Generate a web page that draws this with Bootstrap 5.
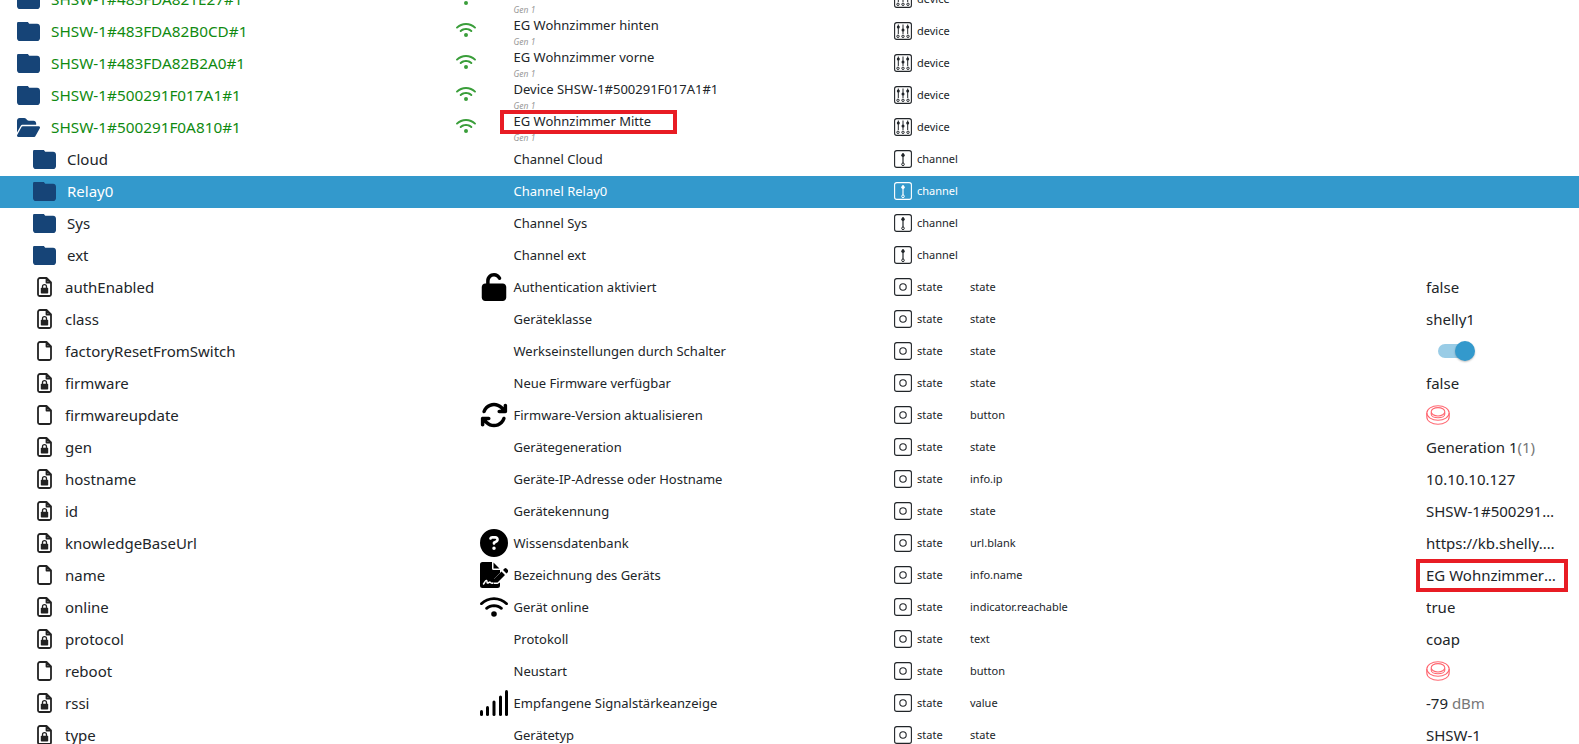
<!DOCTYPE html>
<html lang="de">
<head>
<meta charset="utf-8">
<title>Objekte</title>
<link href="https://cdn.jsdelivr.net/npm/bootstrap@5.3.0/dist/css/bootstrap.min.css" rel="stylesheet">
<style>
html,body{height:744px;overflow:hidden;background:#fff}
body{font-family:"Noto Sans","Open Sans",sans-serif;color:#212529}
.obj-tree{margin-top:-16px;position:relative}
.obj-row{height:32px;line-height:18px;padding-bottom:2px}
.obj-row.is-selected{background:#3399cc;color:#fff}
.col-name{width:454px;flex:none;font-size:15px}
.col-icon{width:59.5px;flex:none}
.col-desc{width:380.5px;flex:none;font-size:13px;position:relative;height:32px;line-height:32px}
.col-type{width:76px;flex:none;font-size:11px}
.col-role{width:456px;flex:none;font-size:11px}
.col-value{width:131px;flex:none;font-size:15px}
.lvl-1{padding-left:17px}.lvl-2{padding-left:33px}.lvl-3{padding-left:37px}
.ico-folder{width:23px;height:19px;color:#164477;margin-right:11px;flex:none}
.ico-file{width:15px;height:20px;margin-right:13px;flex:none;color:#222}
.ico-wifi{width:20px;height:16px;color:#3a9e3a;margin-left:2px;margin-top:-2px}
.ico-big{width:28px;height:28px;margin-left:26px;color:#000;display:block}
.ico-type{width:18px;height:18px;margin-right:5px;flex:none}
.ico-btn{width:24px;height:20px;display:block}
.obj-green{color:#108a10;font-size:15.300px}
.obj-muted{color:#777}
.desc-title{line-height:18px;position:absolute;left:0;top:1px;white-space:nowrap}
.desc-gen{position:absolute;left:0;top:21px;font-size:8.5px;line-height:12px;color:#999;font-style:italic;white-space:nowrap}
.obj-switch{display:block;position:relative;width:30px;height:14px;margin-left:12px;border-radius:7px;background:#99cce6}
.obj-switch::after{content:"";position:absolute;right:-7px;top:-3px;width:20px;height:20px;border-radius:50%;background:#3399cc;box-shadow:0 1px 2px rgba(0,0,0,.25)}
.mark-box{position:absolute;border:4px solid #e81c24;pointer-events:none}
.mark-a{left:500px;top:126px;width:177px;height:24px}
.mark-b{left:1416px;top:575px;width:152px;height:33px}
</style>
</head>
<body>
<svg width="0" height="0" class="position-absolute">
<symbol id="i-folder" viewBox="0 0 512 424" preserveAspectRatio="none"><path fill="currentColor" d="M64 424H448c35.3 0 64-28.7 64-64V104c0-35.3-28.7-64-64-64H288c-10.1 0-19.6-4.700-25.600-12.800L243.200 1.600C231.100-14.500 212.100-24 192-24H64C28.700-24 0 4.700 0 40V360c0 35.300 28.700 64 64 64z" transform="translate(0,0)"/></symbol>
<symbol id="i-open" viewBox="0 32 576 448" preserveAspectRatio="none"><path fill="currentColor" d="M88.700 223.800L0 375.800V96C0 60.700 28.700 32 64 32H181.500c17 0 33.300 6.700 45.300 18.700l26.500 26.500c12 12 28.300 18.700 45.300 18.700H416c35.300 0 64 28.700 64 64v32H144c-22.800 0-43.800 12.100-55.300 31.800zm27.600 16.100C122.100 230 132.600 224 144 224H544c11.500 0 21.900 6.200 27.600 16.100s5.600 22.200-.1 32.100l-112 192C453.800 474 443.400 480 432 480H32c-11.500 0-21.900-6.200-27.600-16.100s-5.600-22.200 .1-32.100l112-192z"/></symbol>
<symbol id="i-wifi" viewBox="0 32 640 448"><path fill="currentColor" d="M54.200 202.900C123.200 136.700 216.800 96 320 96s196.800 40.700 265.800 106.900c12.800 12.200 33 11.800 45.200-.9s11.800-33-.9-45.200C549.700 79.500 440.400 32 320 32S90.300 79.500 9.800 156.700C-2.900 169-3.300 189.200 8.900 202s32.500 13.200 45.200 .9zM320 256c56.800 0 108.600 21.100 148.200 56c13.300 11.700 33.500 10.400 45.200-2.800s10.400-33.500-2.800-45.200C459.800 219.200 393 192 320 192s-139.800 27.200-190.500 72c-13.300 11.700-14.500 31.900-2.800 45.200s31.900 14.500 45.200 2.800c39.500-34.900 91.300-56 148.200-56zm64 160a64 64 0 1 0 -128 0 64 64 0 1 0 128 0z"/></symbol>
<symbol id="i-file" viewBox="0 0 15 20"><path fill="none" stroke="currentColor" stroke-width="1.800" stroke-linejoin="round" d="M3 1H9.500L14 5.500V17.500A1.600 1.600 0 0 1 12.400 19H2.600A1.600 1.600 0 0 1 1 17.500V3A2 2 0 0 1 3 1ZM9.500 1V5.500H14"/></symbol>
<symbol id="i-filelock" viewBox="0 0 15 20"><path fill="none" stroke="currentColor" stroke-width="1.800" stroke-linejoin="round" d="M3 1H9.500L14 5.500V17.500A1.600 1.600 0 0 1 12.400 19H2.600A1.600 1.600 0 0 1 1 17.500V3A2 2 0 0 1 3 1ZM9.500 1V5.500H14"/><path fill="none" stroke="currentColor" stroke-width="1.300" d="M5.500 11V9.700A2 2 0 0 1 9.500 9.700V11"/><rect x="3.800" y="10.800" width="7.400" height="5.700" rx=".8" fill="currentColor"/></symbol>
<symbol id="i-device" viewBox="0 0 18 18"><rect x=".6" y=".6" width="16.800" height="16.800" rx="2.200" fill="none" stroke="currentColor" stroke-width="1.100"/><g fill="none" stroke="currentColor" stroke-width="1"><path d="M4.300 2.500V12M9 2.500V12M13.700 2.500V12"/><circle cx="4" cy="14.300" r="1.200"/><circle cx="9" cy="14.300" r="1.200"/><circle cx="14" cy="14.300" r="1.200"/></g><g fill="currentColor"><circle cx="4.300" cy="5" r="1.500"/><circle cx="9" cy="8" r="1.500"/><circle cx="13.700" cy="5" r="1.500"/></g></symbol>
<symbol id="i-channel" viewBox="0 0 18 18"><rect x=".6" y=".6" width="16.800" height="16.800" rx="2.200" fill="none" stroke="currentColor" stroke-width="1.100"/><path d="M9 3V13" fill="none" stroke="currentColor" stroke-width="1.200"/><circle cx="9" cy="5.300" r="1.700" fill="currentColor"/><circle cx="9" cy="14.300" r="1.300" fill="none" stroke="currentColor"/></symbol>
<symbol id="i-state" viewBox="0 0 18 18"><rect x=".6" y=".6" width="16.800" height="16.800" rx="2.200" fill="none" stroke="currentColor" stroke-width="1.100"/><circle cx="9" cy="9" r="3.200" fill="none" stroke="currentColor" stroke-width="1.100"/></symbol>
<symbol id="i-btn" viewBox="0 0 24 20"><g fill="none" stroke="#ff6670" stroke-width="1.100"><path d="M.8 8V12C.8 16 5.800 19.200 12 19.200S23.200 16 23.200 12V8"/><ellipse cx="12" cy="8" rx="11.200" ry="7.200"/><ellipse cx="12" cy="6.800" rx="6.800" ry="4.200"/><path d="M5.200 7.500V9C5.200 11.200 8.200 12.800 12 12.800S18.800 11.200 18.800 9V7.500"/></g></symbol>
<symbol id="i-unlock" viewBox="0 0 448 512"><path fill="currentColor" d="M144 144c0-44.200 35.800-80 80-80c31.900 0 59.400 18.600 72.300 45.700c7.600 16 26.700 22.800 42.600 15.200s22.800-26.700 15.200-42.600C331 33.700 281.500 0 224 0C144.500 0 80 64.500 80 144v48H64c-35.300 0-64 28.700-64 64V448c0 35.300 28.700 64 64 64H384c35.300 0 64-28.700 64-64V256c0-35.300-28.700-64-64-64H144V144z"/></symbol>
<symbol id="i-sync" viewBox="0 0 512 512"><path fill="currentColor" d="M105.100 202.600c7.700-21.800 20.200-42.300 37.800-59.800c62.500-62.500 163.800-62.500 226.300 0L386.300 160H352c-17.700 0-32 14.300-32 32s14.300 32 32 32H463.500c0 0 0 0 0 0h.4c17.700 0 32-14.300 32-32V80c0-17.700-14.300-32-32-32s-32 14.300-32 32v35.200L414.400 97.600c-87.500-87.500-229.300-87.500-316.800 0C73.200 122 55.600 150.700 44.800 181.400c-5.900 16.700 2.900 34.900 19.500 40.800s34.900-2.900 40.800-19.500zM39 289.300c-5 1.500-9.800 4.200-13.700 8.200c-4 4-6.700 8.800-8.100 14c-.3 1.200-.6 2.500-.8 3.800c-.3 1.700-.4 3.400-.4 5.100V432c0 17.700 14.300 32 32 32s32-14.300 32-32V396.900l17.600 17.500 0 0c87.500 87.400 229.300 87.400 316.700 0c24.400-24.400 42.100-53.100 52.900-83.700c5.900-16.700-2.900-34.900-19.500-40.800s-34.900 2.900-40.800 19.500c-7.700 21.800-20.200 42.300-37.800 59.800c-62.500 62.500-163.800 62.500-226.300 0l-.1-.1L125.600 352H160c17.700 0 32-14.300 32-32s-14.300-32-32-32H48.400c-1.600 0-3.200 .1-4.800 .3s-3.100 .5-4.600 1z"/></symbol>
<symbol id="i-help" viewBox="0 0 512 512"><path fill="currentColor" d="M256 512A256 256 0 1 0 256 0a256 256 0 1 0 0 512zM169.800 165.300c7.900-22.300 29.100-37.300 52.800-37.300h58.300c34.900 0 63.100 28.300 63.100 63.100c0 22.600-12.100 43.500-31.700 54.800L280 264.400c-.2 13-10.900 23.600-24 23.600c-13.300 0-24-10.700-24-24V250.500c0-8.600 4.600-16.500 12.100-20.800l44.300-25.400c4.700-2.700 7.600-7.700 7.600-13.100c0-8.400-6.800-15.100-15.100-15.100H222.600c-3.400 0-6.400 2.100-7.500 5.300l-.4 1.200c-4.400 12.500-18.200 19-30.600 14.600s-19-18.200-14.600-30.600l.4-1.200zM224 352a32 32 0 1 1 64 0 32 32 0 1 1 -64 0z"/></symbol>
<symbol id="i-sign" viewBox="0 0 28 26"><path fill="currentColor" d="M2.500 0H12V6.500A1.500 1.500 0 0 0 13.500 8H20V10.800L14 17V22H17.500L20 20.500V23.500A2.500 2.500 0 0 1 17.500 26H2.500A2.500 2.500 0 0 1 0 23.500V2.500A2.500 2.500 0 0 1 2.500 0ZM13.500 .5L19.500 6.500H13.500Z"/><path fill="none" stroke="#fff" stroke-width="1.500" stroke-linecap="round" stroke-linejoin="round" d="M3.500 22C5 20 5.500 18 6.500 18.500S6.500 21.500 8 21S9.500 19.500 10.500 20.500S12 21.500 13 21"/><path fill="currentColor" d="M21.500 9.500L25 13L17.500 20.500H14V17ZM23 8L24.500 6.500A1.400 1.400 0 0 1 26.500 6.500L28 8A1.400 1.400 0 0 1 28 10L26.500 11.500Z"/></symbol>
<symbol id="i-signal" viewBox="0 0 28 26"><g fill="currentColor"><rect x="0" y="20" width="3" height="6" rx="1.500"/><rect x="6" y="16" width="3" height="10" rx="1.500"/><rect x="12.500" y="10.500" width="3" height="15.500" rx="1.500"/><rect x="19" y="5.500" width="3" height="20.500" rx="1.500"/><rect x="25" y="0" width="3" height="26" rx="1.500"/></g></symbol>
</svg>

<main class="obj-tree">
  <div class="obj-row d-flex align-items-center"><div class="col-name lvl-1 d-flex align-items-center obj-green"><svg class="ico-folder"><use href="#i-folder"/></svg><span>SHSW-1#483FDA821E27#1</span></div><div class="col-icon"><svg class="ico-wifi d-block"><use href="#i-wifi"/></svg></div><div class="col-desc"><span class="desc-title">EG Wohnzimmer</span><span class="desc-gen">Gen 1</span></div><div class="col-type d-flex align-items-center"><svg class="ico-type"><use href="#i-device"/></svg>device</div><div class="col-role"></div><div class="col-value"></div></div>
  <div class="obj-row d-flex align-items-center"><div class="col-name lvl-1 d-flex align-items-center obj-green"><svg class="ico-folder"><use href="#i-folder"/></svg><span>SHSW-1#483FDA82B0CD#1</span></div><div class="col-icon"><svg class="ico-wifi d-block"><use href="#i-wifi"/></svg></div><div class="col-desc"><span class="desc-title">EG Wohnzimmer hinten</span><span class="desc-gen">Gen 1</span></div><div class="col-type d-flex align-items-center"><svg class="ico-type"><use href="#i-device"/></svg>device</div><div class="col-role"></div><div class="col-value"></div></div>
  <div class="obj-row d-flex align-items-center"><div class="col-name lvl-1 d-flex align-items-center obj-green"><svg class="ico-folder"><use href="#i-folder"/></svg><span>SHSW-1#483FDA82B2A0#1</span></div><div class="col-icon"><svg class="ico-wifi d-block"><use href="#i-wifi"/></svg></div><div class="col-desc"><span class="desc-title">EG Wohnzimmer vorne</span><span class="desc-gen">Gen 1</span></div><div class="col-type d-flex align-items-center"><svg class="ico-type"><use href="#i-device"/></svg>device</div><div class="col-role"></div><div class="col-value"></div></div>
  <div class="obj-row d-flex align-items-center"><div class="col-name lvl-1 d-flex align-items-center obj-green"><svg class="ico-folder"><use href="#i-folder"/></svg><span>SHSW-1#500291F017A1#1</span></div><div class="col-icon"><svg class="ico-wifi d-block"><use href="#i-wifi"/></svg></div><div class="col-desc"><span class="desc-title">Device SHSW-1#500291F017A1#1</span><span class="desc-gen">Gen 1</span></div><div class="col-type d-flex align-items-center"><svg class="ico-type"><use href="#i-device"/></svg>device</div><div class="col-role"></div><div class="col-value"></div></div>
  <div class="obj-row d-flex align-items-center"><div class="col-name lvl-1 d-flex align-items-center obj-green"><svg class="ico-folder"><use href="#i-open"/></svg><span>SHSW-1#500291F0A810#1</span></div><div class="col-icon"><svg class="ico-wifi d-block"><use href="#i-wifi"/></svg></div><div class="col-desc"><span class="desc-title">EG Wohnzimmer Mitte</span><span class="desc-gen">Gen 1</span></div><div class="col-type d-flex align-items-center"><svg class="ico-type"><use href="#i-device"/></svg>device</div><div class="col-role"></div><div class="col-value"></div></div>
  <div class="obj-row d-flex align-items-center"><div class="col-name lvl-2 d-flex align-items-center"><svg class="ico-folder"><use href="#i-folder"/></svg><span>Cloud</span></div><div class="col-icon"></div><div class="col-desc">Channel Cloud</div><div class="col-type d-flex align-items-center"><svg class="ico-type"><use href="#i-channel"/></svg>channel</div><div class="col-role"></div><div class="col-value"></div></div>
  <div class="obj-row is-selected d-flex align-items-center"><div class="col-name lvl-2 d-flex align-items-center"><svg class="ico-folder"><use href="#i-folder"/></svg><span>Relay0</span></div><div class="col-icon"></div><div class="col-desc">Channel Relay0</div><div class="col-type d-flex align-items-center"><svg class="ico-type"><use href="#i-channel"/></svg>channel</div><div class="col-role"></div><div class="col-value"></div></div>
  <div class="obj-row d-flex align-items-center"><div class="col-name lvl-2 d-flex align-items-center"><svg class="ico-folder"><use href="#i-folder"/></svg><span>Sys</span></div><div class="col-icon"></div><div class="col-desc">Channel Sys</div><div class="col-type d-flex align-items-center"><svg class="ico-type"><use href="#i-channel"/></svg>channel</div><div class="col-role"></div><div class="col-value"></div></div>
  <div class="obj-row d-flex align-items-center"><div class="col-name lvl-2 d-flex align-items-center"><svg class="ico-folder"><use href="#i-folder"/></svg><span>ext</span></div><div class="col-icon"></div><div class="col-desc">Channel ext</div><div class="col-type d-flex align-items-center"><svg class="ico-type"><use href="#i-channel"/></svg>channel</div><div class="col-role"></div><div class="col-value"></div></div>

  <div class="obj-row d-flex align-items-center"><div class="col-name lvl-3 d-flex align-items-center"><svg class="ico-file"><use href="#i-filelock"/></svg><span>authEnabled</span></div><div class="col-icon"><svg class="ico-big"><use href="#i-unlock"/></svg></div><div class="col-desc">Authentication aktiviert</div><div class="col-type d-flex align-items-center"><svg class="ico-type"><use href="#i-state"/></svg>state</div><div class="col-role">state</div><div class="col-value text-truncate">false</div></div>
  <div class="obj-row d-flex align-items-center"><div class="col-name lvl-3 d-flex align-items-center"><svg class="ico-file"><use href="#i-filelock"/></svg><span>class</span></div><div class="col-icon"></div><div class="col-desc">Geräteklasse</div><div class="col-type d-flex align-items-center"><svg class="ico-type"><use href="#i-state"/></svg>state</div><div class="col-role">state</div><div class="col-value text-truncate">shelly1</div></div>
  <div class="obj-row d-flex align-items-center"><div class="col-name lvl-3 d-flex align-items-center"><svg class="ico-file"><use href="#i-file"/></svg><span>factoryResetFromSwitch</span></div><div class="col-icon"></div><div class="col-desc">Werkseinstellungen durch Schalter</div><div class="col-type d-flex align-items-center"><svg class="ico-type"><use href="#i-state"/></svg>state</div><div class="col-role">state</div><div class="col-value"><span class="obj-switch"></span></div></div>
  <div class="obj-row d-flex align-items-center"><div class="col-name lvl-3 d-flex align-items-center"><svg class="ico-file"><use href="#i-filelock"/></svg><span>firmware</span></div><div class="col-icon"></div><div class="col-desc">Neue Firmware verfügbar</div><div class="col-type d-flex align-items-center"><svg class="ico-type"><use href="#i-state"/></svg>state</div><div class="col-role">state</div><div class="col-value text-truncate">false</div></div>
  <div class="obj-row d-flex align-items-center"><div class="col-name lvl-3 d-flex align-items-center"><svg class="ico-file"><use href="#i-file"/></svg><span>firmwareupdate</span></div><div class="col-icon"><svg class="ico-big"><use href="#i-sync"/></svg></div><div class="col-desc">Firmware-Version aktualisieren</div><div class="col-type d-flex align-items-center"><svg class="ico-type"><use href="#i-state"/></svg>state</div><div class="col-role">button</div><div class="col-value"><svg class="ico-btn"><use href="#i-btn"/></svg></div></div>
  <div class="obj-row d-flex align-items-center"><div class="col-name lvl-3 d-flex align-items-center"><svg class="ico-file"><use href="#i-filelock"/></svg><span>gen</span></div><div class="col-icon"></div><div class="col-desc">Gerätegeneration</div><div class="col-type d-flex align-items-center"><svg class="ico-type"><use href="#i-state"/></svg>state</div><div class="col-role">state</div><div class="col-value text-truncate">Generation 1<span class="obj-muted">(1)</span></div></div>
  <div class="obj-row d-flex align-items-center"><div class="col-name lvl-3 d-flex align-items-center"><svg class="ico-file"><use href="#i-filelock"/></svg><span>hostname</span></div><div class="col-icon"></div><div class="col-desc">Geräte-IP-Adresse oder Hostname</div><div class="col-type d-flex align-items-center"><svg class="ico-type"><use href="#i-state"/></svg>state</div><div class="col-role">info.ip</div><div class="col-value text-truncate">10.10.10.127</div></div>
  <div class="obj-row d-flex align-items-center"><div class="col-name lvl-3 d-flex align-items-center"><svg class="ico-file"><use href="#i-filelock"/></svg><span>id</span></div><div class="col-icon"></div><div class="col-desc">Gerätekennung</div><div class="col-type d-flex align-items-center"><svg class="ico-type"><use href="#i-state"/></svg>state</div><div class="col-role">state</div><div class="col-value text-truncate">SHSW-1#500291F0A810#1</div></div>
  <div class="obj-row d-flex align-items-center"><div class="col-name lvl-3 d-flex align-items-center"><svg class="ico-file"><use href="#i-filelock"/></svg><span>knowledgeBaseUrl</span></div><div class="col-icon"><svg class="ico-big"><use href="#i-help"/></svg></div><div class="col-desc">Wissensdatenbank</div><div class="col-type d-flex align-items-center"><svg class="ico-type"><use href="#i-state"/></svg>state</div><div class="col-role">url.blank</div><div class="col-value text-truncate">https://kb.shelly.cloud/</div></div>
  <div class="obj-row d-flex align-items-center"><div class="col-name lvl-3 d-flex align-items-center"><svg class="ico-file"><use href="#i-file"/></svg><span>name</span></div><div class="col-icon"><svg class="ico-big"><use href="#i-sign"/></svg></div><div class="col-desc">Bezeichnung des Geräts</div><div class="col-type d-flex align-items-center"><svg class="ico-type"><use href="#i-state"/></svg>state</div><div class="col-role">info.name</div><div class="col-value text-truncate">EG Wohnzimmer Mitte</div></div>
  <div class="obj-row d-flex align-items-center"><div class="col-name lvl-3 d-flex align-items-center"><svg class="ico-file"><use href="#i-filelock"/></svg><span>online</span></div><div class="col-icon"><svg class="ico-big"><use href="#i-wifi"/></svg></div><div class="col-desc">Gerät online</div><div class="col-type d-flex align-items-center"><svg class="ico-type"><use href="#i-state"/></svg>state</div><div class="col-role">indicator.reachable</div><div class="col-value text-truncate">true</div></div>
  <div class="obj-row d-flex align-items-center"><div class="col-name lvl-3 d-flex align-items-center"><svg class="ico-file"><use href="#i-filelock"/></svg><span>protocol</span></div><div class="col-icon"></div><div class="col-desc">Protokoll</div><div class="col-type d-flex align-items-center"><svg class="ico-type"><use href="#i-state"/></svg>state</div><div class="col-role">text</div><div class="col-value text-truncate">coap</div></div>
  <div class="obj-row d-flex align-items-center"><div class="col-name lvl-3 d-flex align-items-center"><svg class="ico-file"><use href="#i-file"/></svg><span>reboot</span></div><div class="col-icon"></div><div class="col-desc">Neustart</div><div class="col-type d-flex align-items-center"><svg class="ico-type"><use href="#i-state"/></svg>state</div><div class="col-role">button</div><div class="col-value"><svg class="ico-btn"><use href="#i-btn"/></svg></div></div>
  <div class="obj-row d-flex align-items-center"><div class="col-name lvl-3 d-flex align-items-center"><svg class="ico-file"><use href="#i-filelock"/></svg><span>rssi</span></div><div class="col-icon"><svg class="ico-big"><use href="#i-signal"/></svg></div><div class="col-desc">Empfangene Signalstärkeanzeige</div><div class="col-type d-flex align-items-center"><svg class="ico-type"><use href="#i-state"/></svg>state</div><div class="col-role">value</div><div class="col-value text-truncate">-79 <span class="obj-muted">dBm</span></div></div>
  <div class="obj-row d-flex align-items-center"><div class="col-name lvl-3 d-flex align-items-center"><svg class="ico-file"><use href="#i-filelock"/></svg><span>type</span></div><div class="col-icon"></div><div class="col-desc">Gerätetyp</div><div class="col-type d-flex align-items-center"><svg class="ico-type"><use href="#i-state"/></svg>state</div><div class="col-role">state</div><div class="col-value text-truncate">SHSW-1</div></div>
  <div class="mark-box mark-a"></div>
  <div class="mark-box mark-b"></div>
</main>
<script src="https://cdn.jsdelivr.net/npm/bootstrap@5.3.0/dist/js/bootstrap.bundle.min.js"></script>
</body>
</html>
